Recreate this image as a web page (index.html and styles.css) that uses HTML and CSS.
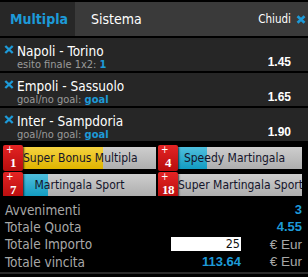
FILE: index.html
```html
<!DOCTYPE html>
<html>
<head>
<meta charset="utf-8">
<link rel="stylesheet" href="styles.css">
</head>
<body>
<div class="slip">
  <div class="tabs">
    <div class="tab active">Multipla</div>
    <div class="tab">Sistema</div>
    <div class="close">Chiudi
      <svg class="x-close" width="10" height="9" viewBox="0 0 10 9"><path d="M1.5 1.2 L8.5 7.8 M8.5 1.2 L1.5 7.8" stroke="#1d9ad8" stroke-width="2.6"/></svg>
    </div>
  </div>

  <div class="events">
    <div class="event">
      <svg class="rm" width="10" height="9" viewBox="0 0 10 9"><path d="M1.3 1 L8.7 8 M8.7 1 L1.3 8" stroke="#1d9ad8" stroke-width="2.4"/></svg>
      <div class="info">
        <div class="match">Napoli - Torino</div>
        <div class="pick">esito finale 1x2: <b>1</b></div>
      </div>
      <div class="odd">1.45</div>
    </div>
    <div class="event">
      <svg class="rm" width="10" height="9" viewBox="0 0 10 9"><path d="M1.3 1 L8.7 8 M8.7 1 L1.3 8" stroke="#1d9ad8" stroke-width="2.4"/></svg>
      <div class="info">
        <div class="match">Empoli - Sassuolo</div>
        <div class="pick">goal/no goal: <b>goal</b></div>
      </div>
      <div class="odd">1.65</div>
    </div>
    <div class="event">
      <svg class="rm" width="10" height="9" viewBox="0 0 10 9"><path d="M1.3 1 L8.7 8 M8.7 1 L1.3 8" stroke="#1d9ad8" stroke-width="2.4"/></svg>
      <div class="info">
        <div class="match">Inter - Sampdoria</div>
        <div class="pick">goal/no goal: <b>goal</b></div>
      </div>
      <div class="odd">1.90</div>
    </div>
  </div>

  <div class="bonuses">
    <div class="bonus yellow" style="--p:100px"><span class="badge"><span class="plus">+</span><span class="num">1</span></span><span class="label">Super Bonus Multipla</span></div>
    <div class="bonus cyan" style="--p:49px"><span class="badge"><span class="plus">+</span><span class="num">4</span></span><span class="label">Speedy Martingala</span></div>
    <div class="bonus cyan" style="--p:45px"><span class="badge"><span class="plus">+</span><span class="num">7</span></span><span class="label">Martingala Sport</span></div>
    <div class="bonus cyan" style="--p:3px"><span class="badge"><span class="plus">+</span><span class="num">18</span></span><span class="label">Super Martingala Sport</span></div>
  </div>

  <div class="totals">
    <div class="trow"><span class="tlabel">Avvenimenti</span><span class="tval wide">3</span></div>
    <div class="trow"><span class="tlabel">Totale Quota</span><span class="tval wide">4.55</span></div>
    <div class="trow"><span class="tlabel">Totale Importo</span><span class="tbox"><span class="input">25</span></span><span class="unit">€ Eur</span></div>
    <div class="trow"><span class="tlabel">Totale vincita</span><span class="tval">113.64</span><span class="unit">€ Eur</span></div>
  </div>
</div>
</body>
</html>
```

FILE: styles.css
```css
* { box-sizing: border-box; }
html, body { margin: 0; padding: 0; }
body {
  background: #000;
  width: 308px;
  height: 277px;
  overflow: hidden;
  font-family: "DejaVu Sans Condensed", "DejaVu Sans", sans-serif;
  font-stretch: condensed;
}
.slip { width: 308px; }

.tabs {
  margin-top: 2px;
  height: 34px;
  background: #3a3a3a;
  display: flex;
  align-items: stretch;
}
.tab {
  display: flex;
  align-items: center;
  font-size: 14px;
  color: #fff;
  padding: 0 0 0 16px;
}
.tab.active {
  width: 75px;
  padding-left: 10px;
  background: #272727;
  color: #1d9ad8;
  font-weight: bold;
}
.close {
  margin-left: auto;
  display: flex;
  align-items: center;
  gap: 5px;
  padding-right: 2px;
  font-size: 11.5px;
  color: #fff;
}

.events { margin-top: 2px; }
.event {
  height: 33px;
  margin-bottom: 2px;
  background: #262626;
  display: flex;
  align-items: flex-start;
  padding: 0 17px 0 4px;
}
.rm { margin-top: 7px; flex: none; }
.info { margin-left: 3px; flex: 1; padding-top: 6px; }
.match { font-size: 13.5px; line-height: 15px; color: #fff; }
.pick { font-size: 11px; line-height: 12px; color: #9a9a9a; }
.pick b { color: #1d9ad8; }
.odd {
  align-self: flex-end;
  padding-bottom: 2px;
  font-size: 12px;
  font-weight: bold;
  color: #fff;
  font-family: "Liberation Sans", sans-serif;
}

.bonuses {
  width: 302px;
  overflow: hidden;
  padding: 4px 0 0 3px;
  display: grid;
  grid-template-columns: 153px 153px;
  column-gap: 2px;
  row-gap: 5px;
}
.bonus {
  height: 22px;
  display: flex;
  align-items: center;
  background:
    linear-gradient(to bottom, rgba(255,255,255,0.25), rgba(0,0,0,0.08)),
    linear-gradient(to right, var(--c) var(--p), #bdbdbd var(--p));
  white-space: nowrap;
}
.bonus.yellow { --c: #f2c400; }
.bonus.cyan { --c: #14a9d2; }
.badge {
  flex: none;
  width: 20px;
  height: 26px;
  margin: -2px 0 -2px 0;
  padding-top: 1px;
  border-radius: 2px;
  background: linear-gradient(to bottom, #e42424, #b80d0d);
  box-shadow: 1px 1px 2px rgba(0,0,0,0.7);
  color: #fff;
  font-family: "Liberation Serif", serif;
  font-weight: bold;
  display: flex;
  flex-direction: column;
  align-items: center;
}
.plus {
  align-self: flex-start;
  margin-left: 3px;
  font-size: 10px;
  line-height: 8px;
  font-family: "DejaVu Sans", sans-serif;
  font-weight: normal;
}
.num { margin-top: 2px; font-size: 13px; line-height: 13px; letter-spacing: -0.5px; }
.label {
  flex: 1;
  min-width: 0;
  text-align: center;
  padding-right: 20px;
  font-size: 12px;
  color: #14142a;
}

.totals {
  padding: 5px 6px 0 5px;
  border-bottom: 2px solid #2c2c2c;
  height: 78px;
}
.trow {
  display: flex;
  align-items: center;
  height: 17.3px;
  font-size: 13.5px;
}
.tlabel { flex: 1; color: #a8a8a8; }
.tval {
  width: 70px;
  text-align: right;
  color: #1d9ad8;
  font-weight: bold;
  font-family: "Liberation Sans", sans-serif;
  font-size: 13px;
}
.tval.wide { width: auto; }
.tbox { width: 70px; display: flex; }
.input {
  width: 70px;
  height: 14px;
  background: #fff;
  color: #111;
  text-align: right;
  font-size: 12.5px;
  line-height: 14px;
  padding-right: 1px;
}
.unit {
  width: 61px;
  text-align: right;
  color: #a8a8a8;
  font-family: "Liberation Sans", sans-serif;
  font-size: 13.5px;
}
```
